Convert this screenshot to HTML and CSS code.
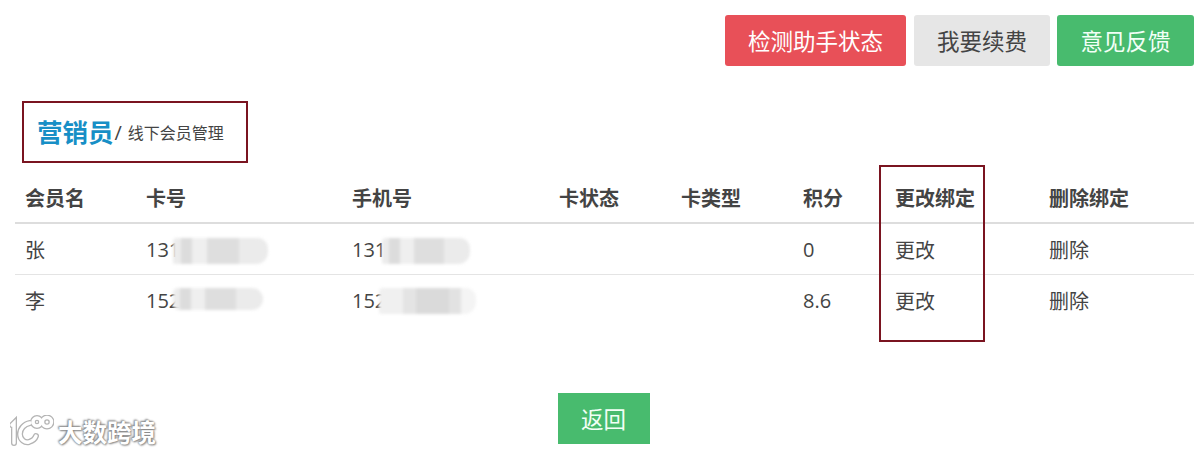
FILE: index.html
```html
<!DOCTYPE html>
<html lang="en">
<head>
  <meta charset="UTF-8" />
  <title>线下会员管理</title>
  <link rel="stylesheet" href="styles.css">
</head>
<body>

  <div class="toolbar">
    <a class="btn btn-red btn-check">检测助手状态</a>
    <a class="btn btn-gray btn-renew">我要续费</a>
    <a class="btn btn-green">意见反馈</a>
  </div>

  <div class="title-box">
    <span class="title-main">营销员</span><span class="title-slash">/</span><span class="title-sub">线下会员管理</span>
  </div>

  <div class="table-wrap">
    <table class="members">
      <colgroup>
        <col class="c-name"><col class="c-card"><col class="c-phone"><col class="c-state">
        <col class="c-type"><col class="c-points"><col class="c-edit"><col class="c-del">
      </colgroup>
      <thead>
        <tr>
          <th>会员名</th><th>卡号</th><th>手机号</th><th>卡状态</th>
          <th>卡类型</th><th>积分</th><th>更改绑定</th><th>删除绑定</th>
        </tr>
      </thead>
      <tbody>
        <tr>
          <td>张</td>
          <td><span class="masked">131<i class="smear smear-a"></i></span></td>
          <td><span class="masked">131<i class="smear smear-b"></i></span></td>
          <td></td><td></td><td>0</td><td>更改</td><td>删除</td>
        </tr>
        <tr>
          <td>李</td>
          <td><span class="masked">152<i class="smear smear-c"></i></span></td>
          <td><span class="masked">152<i class="smear smear-d"></i></span></td>
          <td></td><td></td><td>8.6</td><td>更改</td><td>删除</td>
        </tr>
      </tbody>
    </table>
    <div class="column-mark"></div>
  </div>

  <div class="footer">
    <a class="btn btn-green btn-back">返回</a>
  </div>

  <div class="watermark">
    <svg class="wm-logo" width="44" height="32" viewBox="0 0 44 32" fill="none" stroke-linecap="round">
      <g stroke="#b4b4b4" stroke-width="6">
        <path d="M2 10l2-2v20"/>
        <path d="M20 8c-6 1-10 6-10 11 0 6 5 9 9 8 3-1 6-3 7-6"/>
        <circle cx="27" cy="7" r="4"/>
        <circle cx="37" cy="7" r="4.5"/>
      </g>
      <g stroke="#fff" stroke-width="3.4">
        <path d="M2 10l2-2v20"/>
        <path d="M20 8c-6 1-10 6-10 11 0 6 5 9 9 8 3-1 6-3 7-6"/>
        <circle cx="27" cy="7" r="4"/>
        <circle cx="37" cy="7" r="4.5"/>
      </g>
    </svg>
    <span class="wm-text">大数跨境</span>
  </div>

</body>
</html>
```

FILE: styles.css
```css
* {
  box-sizing: border-box;
}

body {
  margin: 0;
  height: 452px;
  overflow: hidden;
  position: relative;
  background: white;
  color: #444;
  font-family: "Open Sans", "Noto Sans CJK SC", sans-serif;
  font-size: 20px;
}

.toolbar {
  display: flex;
  justify-content: flex-end;
  gap: 7px;
  padding: 15px 4px 0 0;
}

.btn {
  display: flex;
  align-items: center;
  justify-content: center;
  height: 51px;
  width: 137px;
  border-radius: 3px;
  font-size: 22.5px;
}

.btn-check {
  width: 181px;
  margin-right: 1px;
}

.btn-renew {
  width: 136px;
}

.btn-red {
  background-color: #e85058;
  color: white;
}

.btn-gray {
  background-color: #e6e6e6;
  color: #444;
}

.btn-green {
  background-color: #48bb6e;
  color: #f2fff6;
}

.title-box {
  display: flex;
  align-items: center;
  width: 226px;
  height: 62px;
  margin: 35px 0 0 22px;
  padding: 0 0 4px 13px;
  border: 2px solid #7a1420;
}

.title-main {
  font-size: 25.5px;
  font-weight: bold;
  color: #178fc6;
}

.title-slash {
  font-size: 20px;
  margin: 4px 6px 0 1px;
}

.title-sub {
  font-size: 16px;
  margin-top: 3px;
}

.table-wrap {
  position: relative;
  margin: 11px 4px 0 15px;
}

.members {
  width: 1179px;
  border-collapse: collapse;
  table-layout: fixed;
}

.c-name { width: 121px; }
.c-card { width: 206px; }
.c-phone { width: 207px; }
.c-state { width: 122px; }
.c-type { width: 122px; }
.c-points { width: 92px; }
.c-edit { width: 154px; }
.c-del { width: 155px; }

.members th {
  height: 49px;
  padding: 0 10px 2px;
  text-align: left;
  font-weight: bold;
  border-bottom: 2px solid #ddd;
}

.members td {
  height: 51px;
  padding: 2px 10px 0;
  border-bottom: 1px solid #e4e4e4;
}

.members tbody tr:last-child td {
  border-bottom: none;
}

.masked {
  position: relative;
}

/* pixelated smudge over the hidden digits */
.smear {
  position: absolute;
  left: 27px;
  top: 2px;
  height: 26px;
  border-radius: 4px 10px 12px 2px;
  filter: blur(1.5px);
  background: linear-gradient(90deg, #ececec 0 8%, #dcdcdc 8% 20%, #efefef 20% 36%, #dedede 36% 70%, #ebebeb 70% 100%);
}

.smear-a { width: 95px; }
.smear-b { width: 88px; left: 30px; }
.smear-c { width: 90px; top: 1px; height: 22px; border-radius: 6px 14px 14px 8px; }
.smear-d { width: 97px; top: 1px; height: 26px; background: linear-gradient(90deg, #f0f0f0 0 25%, #e4e4e4 25% 38%, #dadada 38% 72%, #e2e2e2 72% 85%, #f4f4f4 85% 100%); }

.column-mark {
  position: absolute;
  left: 864px;
  top: -9px;
  width: 106px;
  height: 177px;
  border: 2px solid #7a1420;
}

.footer {
  display: flex;
  justify-content: center;
  margin-top: 68px;
}

.btn-back {
  width: 92px;
  border-radius: 0;
  margin-left: 9px;
}

.watermark {
  position: absolute;
  left: 10px;
  top: 412px;
  display: flex;
  align-items: center;
  gap: 4px;
}

.wm-text {
  font-size: 24.5px;
  font-weight: bold;
  color: white;
  margin-top: 2px;
  text-shadow: 0 0 2px #888, 1px 1px 2px #888, -1px -1px 2px #888;
}
```
